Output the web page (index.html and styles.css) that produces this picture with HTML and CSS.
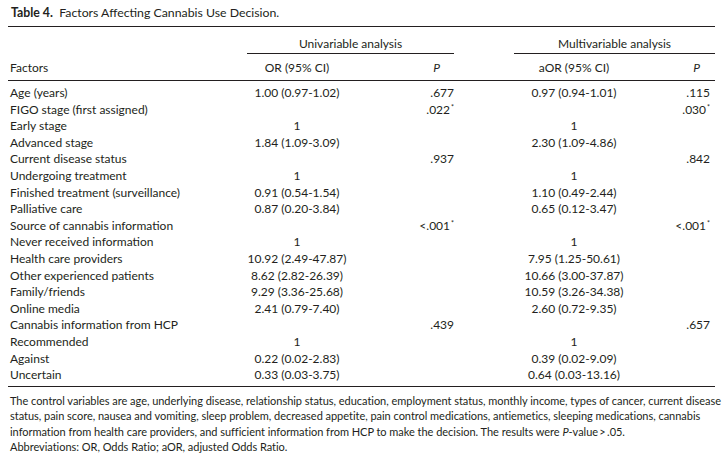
FILE: index.html
```html
<!DOCTYPE html>
<html lang="en">
<head>
<meta charset="utf-8">
<title>Table 4</title>
<link rel="stylesheet" href="styles.css">
</head>
<body>
<div class="page">
  <h1 class="title"><b>Table 4.</b>&nbsp; Factors Affecting Cannabis Use Decision.</h1>
  <table class="tbl">
    <colgroup>
      <col class="c-factor">
      <col class="c-or">
      <col class="c-p1">
      <col class="c-gap">
      <col class="c-aor">
      <col class="c-p2">
    </colgroup>
    <thead>
      <tr class="grp">
        <th></th>
        <th colspan="2" class="grp-cell">Univariable analysis</th>
        <th></th>
        <th colspan="2" class="grp-cell">Multivariable analysis</th>
      </tr>
      <tr class="hdr">
        <th class="factor">Factors</th>
        <th class="ci">OR (95% CI)</th>
        <th class="p1 ph1"><i>P</i></th>
        <th></th>
        <th class="ci">aOR (95% CI)</th>
        <th class="p2 ph2"><i>P</i></th>
      </tr>
    </thead>
    <tbody>
      <tr><td class="factor">Age (years)</td><td class="ci">1.00 (0.97-1.02)</td><td class="p1">.677</td><td></td><td class="ci">0.97 (0.94-1.01)</td><td class="p2">.115</td></tr>
      <tr><td class="factor">FIGO stage (first assigned)</td><td class="ci"></td><td class="p1">.022<sup>*</sup></td><td></td><td class="ci"></td><td class="p2">.030<sup>*</sup></td></tr>
      <tr><td class="factor">Early stage</td><td class="ci">1</td><td class="p1"></td><td></td><td class="ci">1</td><td class="p2"></td></tr>
      <tr><td class="factor">Advanced stage</td><td class="ci">1.84 (1.09-3.09)</td><td class="p1"></td><td></td><td class="ci">2.30 (1.09-4.86)</td><td class="p2"></td></tr>
      <tr><td class="factor">Current disease status</td><td class="ci"></td><td class="p1">.937</td><td></td><td class="ci"></td><td class="p2">.842</td></tr>
      <tr><td class="factor">Undergoing treatment</td><td class="ci">1</td><td class="p1"></td><td></td><td class="ci">1</td><td class="p2"></td></tr>
      <tr><td class="factor">Finished treatment (surveillance)</td><td class="ci">0.91 (0.54-1.54)</td><td class="p1"></td><td></td><td class="ci">1.10 (0.49-2.44)</td><td class="p2"></td></tr>
      <tr><td class="factor">Palliative care</td><td class="ci">0.87 (0.20-3.84)</td><td class="p1"></td><td></td><td class="ci">0.65 (0.12-3.47)</td><td class="p2"></td></tr>
      <tr><td class="factor">Source of cannabis information</td><td class="ci"></td><td class="p1">&lt;.001<sup>*</sup></td><td></td><td class="ci"></td><td class="p2">&lt;.001<sup>*</sup></td></tr>
      <tr><td class="factor">Never received information</td><td class="ci">1</td><td class="p1"></td><td></td><td class="ci">1</td><td class="p2"></td></tr>
      <tr><td class="factor">Health care providers</td><td class="ci">10.92 (2.49-47.87)</td><td class="p1"></td><td></td><td class="ci">7.95 (1.25-50.61)</td><td class="p2"></td></tr>
      <tr><td class="factor">Other experienced patients</td><td class="ci">8.62 (2.82-26.39)</td><td class="p1"></td><td></td><td class="ci">10.66 (3.00-37.87)</td><td class="p2"></td></tr>
      <tr><td class="factor">Family/friends</td><td class="ci">9.29 (3.36-25.68)</td><td class="p1"></td><td></td><td class="ci">10.59 (3.26-34.38)</td><td class="p2"></td></tr>
      <tr><td class="factor">Online media</td><td class="ci">2.41 (0.79-7.40)</td><td class="p1"></td><td></td><td class="ci">2.60 (0.72-9.35)</td><td class="p2"></td></tr>
      <tr><td class="factor">Cannabis information from HCP</td><td class="ci"></td><td class="p1">.439</td><td></td><td class="ci"></td><td class="p2">.657</td></tr>
      <tr><td class="factor">Recommended</td><td class="ci">1</td><td class="p1"></td><td></td><td class="ci">1</td><td class="p2"></td></tr>
      <tr><td class="factor">Against</td><td class="ci">0.22 (0.02-2.83)</td><td class="p1"></td><td></td><td class="ci">0.39 (0.02-9.09)</td><td class="p2"></td></tr>
      <tr><td class="factor">Uncertain</td><td class="ci">0.33 (0.03-3.75)</td><td class="p1"></td><td></td><td class="ci">0.64 (0.03-13.16)</td><td class="p2"></td></tr>
    </tbody>
  </table>
  <p class="note">The control variables are age, underlying disease, relationship status, education, employment status, monthly income, types of cancer, current disease<br>status, pain score, nausea and vomiting, sleep problem, decreased appetite, pain control medications, antiemetics, sleeping medications, cannabis<br>information from health care providers, and sufficient information from HCP to make the decision. The results were <i>P</i>-value&thinsp;&gt;&thinsp;.05.<br>Abbreviations: OR, Odds Ratio; aOR, adjusted Odds Ratio.</p>
</div>
</body>
</html>
```

FILE: styles.css
```css
html, body {
  margin: 0;
  padding: 0;
  background: #ffffff;
}

body {
  font-family: "Lato", "Open Sans", "Liberation Sans", sans-serif;
  color: #231f20;
}

.page {
  padding: 0 8px;
  width: 707px;
}

.title {
  margin: 0;
  padding: 5px 3px 5px;
  font-size: 12.3px;
  line-height: 16px;
  font-weight: 400;
  border-bottom: 1px solid #231f20;
}

.title b {
  font-weight: 700;
}

.tbl {
  width: 707px;
  table-layout: fixed;
  border-collapse: collapse;
  font-size: 12px;
}

.c-factor { width: 239px; }
.c-or { width: 100px; }
.c-p1 { width: 107px; }
.c-gap { width: 60px; }
.c-aor { width: 120px; }
.c-p2 { width: 81px; }

.tbl th,
.tbl td {
  padding: 0;
  font-weight: 400;
  white-space: nowrap;
  line-height: 16.6px;
}

.grp th {
  padding-top: 9px;
  padding-bottom: 1px;
  line-height: 16px;
}

.grp .grp-cell {
  text-align: center;
  border-bottom: 1px solid #231f20;
}

.hdr th {
  padding-top: 6px;
  padding-bottom: 4px;
  line-height: 16px;
  border-bottom: 1px solid #231f20;
}

.tbl tbody tr:first-child td {
  padding-top: 4px;
}

.tbl tbody tr:last-child td {
  padding-bottom: 2px;
  border-bottom: 1px solid #231f20;
}

.factor {
  text-align: left;
  padding-left: 2px !important;
}

.ci {
  text-align: center;
}

.p1 {
  text-align: right;
}

.p2 {
  text-align: right;
  padding-right: 5px !important;
}

.ph1 {
  padding-right: 14px !important;
}

.ph2 {
  padding-right: 15px !important;
}

sup {
  font-size: 7px;
  line-height: 0;
  vertical-align: 0.5em;
  margin-left: 1px;
}

.note {
  margin: 6px 0 0;
  padding-left: 2px;
  font-size: 11px;
  letter-spacing: -0.03px;
  line-height: 15.6px;
  white-space: nowrap;
}
```
